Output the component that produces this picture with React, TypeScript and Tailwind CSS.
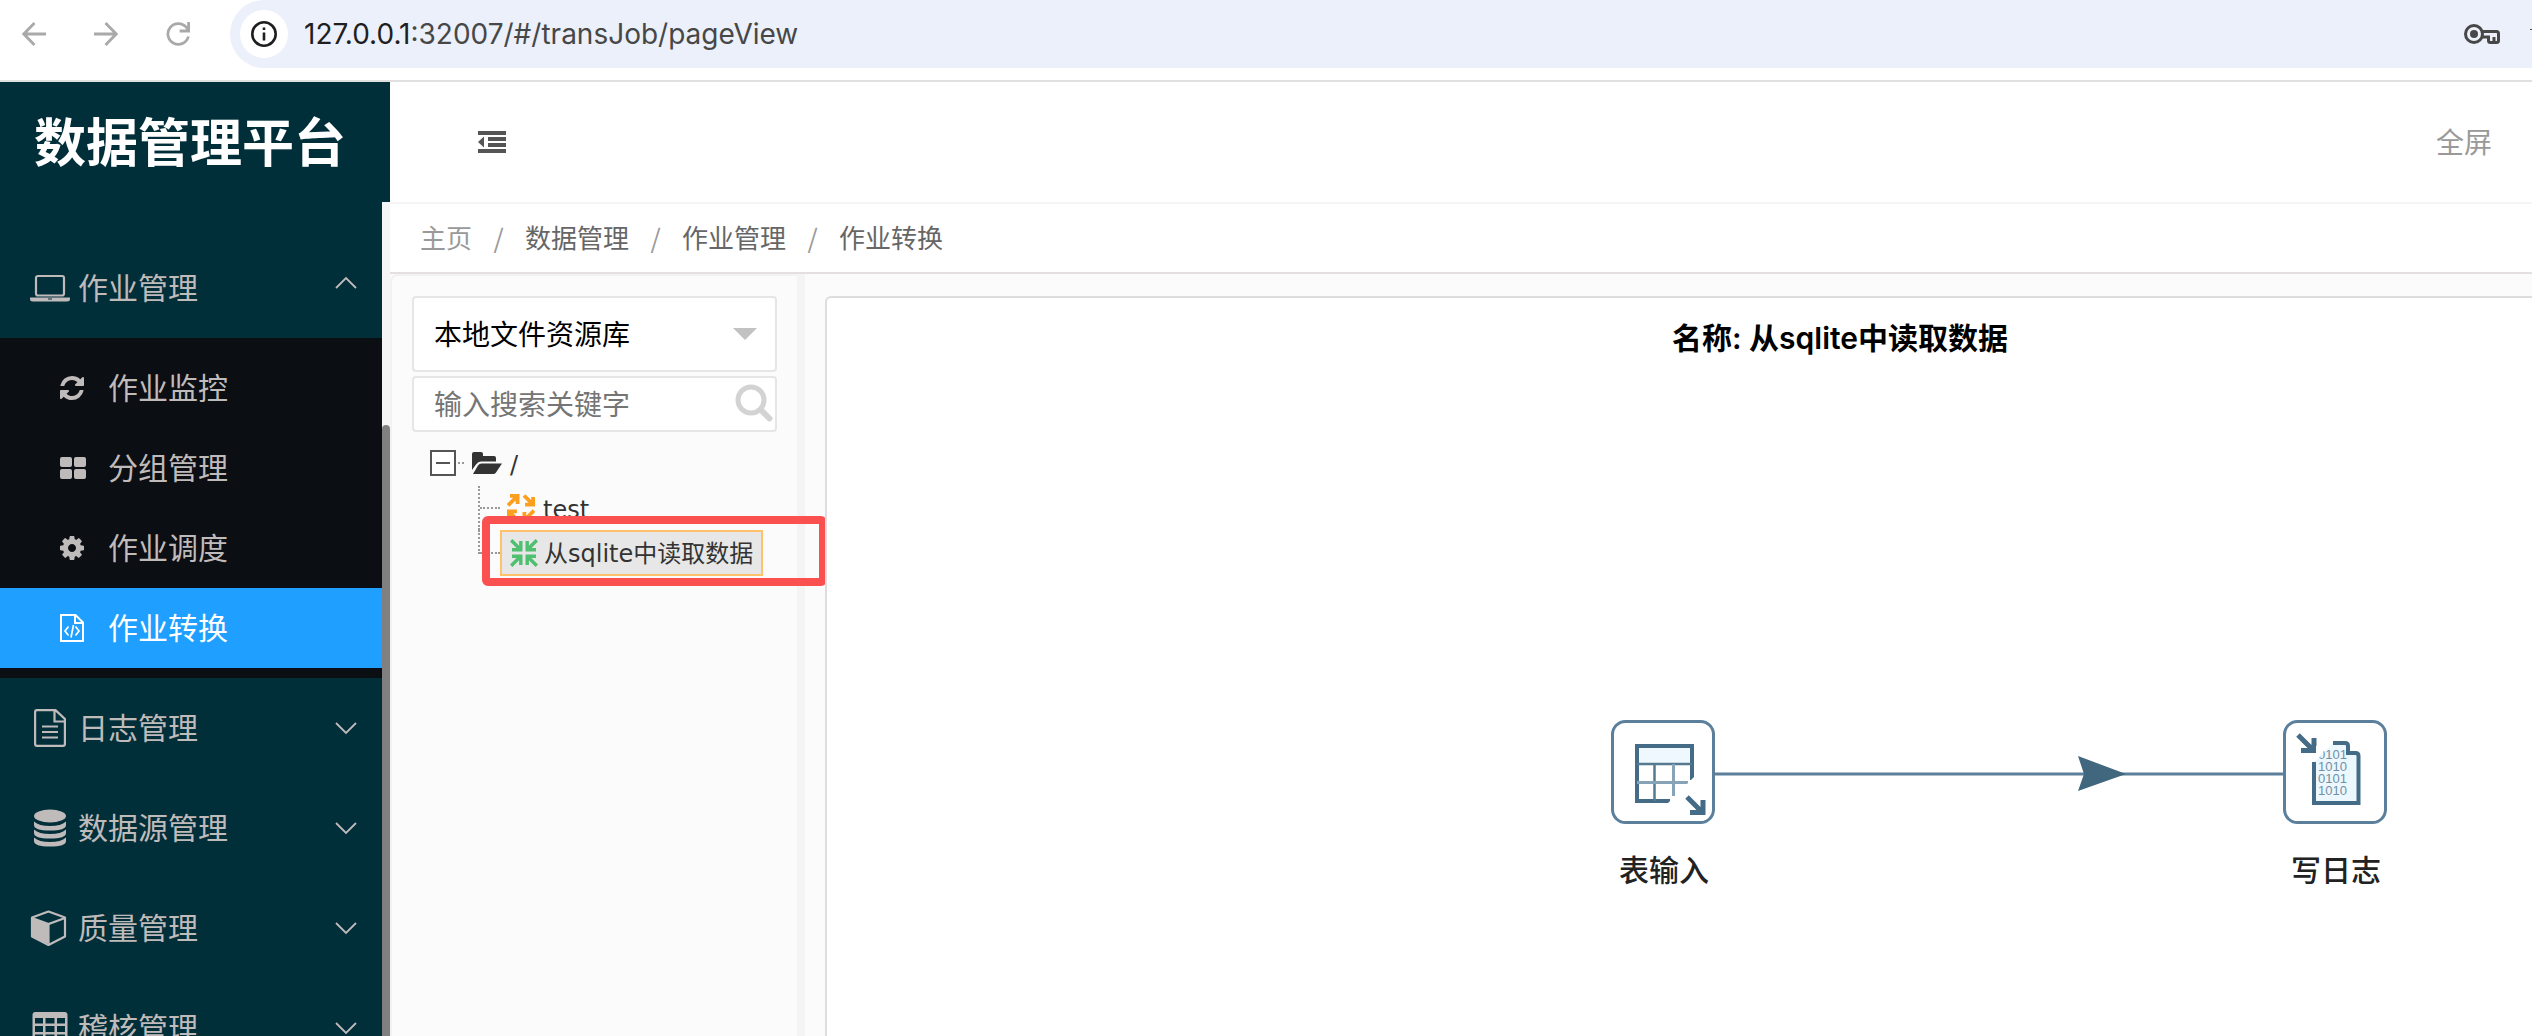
import type { ReactNode } from "react";

type IconProps = { className?: string };

function RefreshIcon({ className }: IconProps) {
  return (
    <svg viewBox="128 128 1536 1536" fill="currentColor" className={className} aria-hidden="true">
      <path d="M1639 1056q0 5-1 7-64 268-268 434.5t-478 166.5q-146 0-282.5-55t-243.5-157l-129 129q-19 19-45 19t-45-19-19-45v-448q0-26 19-45t45-19h448q26 0 45 19t19 45-19 45l-137 137q71 66 161 102t187 36q134 0 250-65t186-179q11-17 53-117 8-23 30-23h192q13 0 22.5 9.5t9.5 22.5zm25-800v448q0 26-19 45t-45 19h-448q-26 0-45-19t-19-45 19-45l138-138q-148-137-349-137-134 0-250 65t-186 179q-11 17-53 117-8 23-30 23h-199q-13 0-22.5-9.5t-9.5-22.5v-7q65-268 270-434.5t480-166.5q146 0 284 55.5t245 156.5l130-129q19-19 45-19t45 19 19 45z" />
    </svg>
  );
}

function GridIcon({ className }: IconProps) {
  return (
    <svg viewBox="0 0 26 22" fill="currentColor" className={className} aria-hidden="true">
      <rect width="12" height="10" rx="2" />
      <rect x="14" width="12" height="10" rx="2" />
      <rect y="12" width="12" height="10" rx="2" />
      <rect x="14" y="12" width="12" height="10" rx="2" />
    </svg>
  );
}

function CogIcon({ className }: IconProps) {
  return (
    <svg viewBox="128 128 1536 1536" fill="currentColor" className={className} aria-hidden="true">
      <path d="M1152 896q0-106-75-181t-181-75-181 75-75 181 75 181 181 75 181-75 75-181zm512-109v222q0 12-8 23t-20 13l-185 28q-19 54-39 91 35 50 107 138 10 12 10 25t-9 23q-27 37-99 108t-94 71q-12 0-26-9l-138-108q-44 23-91 38-16 136-29 186-7 28-36 28h-222q-14 0-24.5-8.5t-11.5-21.5l-28-184q-49-16-90-37l-141 107q-10 9-25 9-14 0-25-11-126-114-165-168-7-10-7-23 0-12 8-23 15-21 51-66.5t54-70.5q-27-50-41-99l-183-27q-13-2-21-12.5t-8-23.5v-222q0-12 8-23t19-13l186-28q14-46 39-92-40-57-107-138-10-12-10-24 0-10 9-23 26-36 98.5-107.5t94.5-71.5q13 0 26 10l138 107q44-23 91-38 16-136 29-186 7-28 36-28h222q14 0 24.5 8.5t11.5 21.5l28 184q49 16 90 37l142-107q9-9 24-9 13 0 25 10 129 119 165 170 7 8 7 22 0 12-8 23-15 21-51 66.5t-54 70.5q26 50 41 98l183 28q13 2 21 12.5t8 23.5z" />
    </svg>
  );
}

function FileCodeIcon({ className }: IconProps) {
  return (
    <svg viewBox="0 0 24 28" fill="none" stroke="currentColor" className={className} aria-hidden="true">
      <path d="M1 1h14.500l7.500 7.500V27H1zM15 1v8h8" strokeWidth="2" />
      <path d="M8.500 12.500L5 17l3.500 4.500M15.500 12.500L19 17l-3.500 4.500M13.500 11l-2.500 12.500" strokeWidth="1.700" />
    </svg>
  );
}

function LaptopIcon({ className }: IconProps) {
  return (
    <svg viewBox="0 0 40 28" className={className} aria-hidden="true">
      <rect x="6" y="2" width="28" height="19.500" rx="2" fill="none" stroke="currentColor" strokeWidth="2.200" />
      <path
        d="M0 23.500h40v1.500q0 2.500-3 2.500H3q-3 0-3-2.500zM18 24.500v1h4v-1z"
        fill="currentColor"
        fillRule="evenodd"
      />
    </svg>
  );
}

function FileTextIcon({ className }: IconProps) {
  return (
    <svg viewBox="0 0 40 38" fill="none" stroke="currentColor" strokeWidth="2.200" className={className} aria-hidden="true">
      <path d="M6 1.100h19.500L34.900 10v25q0 1.900-1.900 1.900H7q-1.900 0-1.900-1.900V3Q5.100 1.100 7 1.100zM24.500 1.100v11.400h10.400" />
      <path d="M12 17.500h16M12 23h16M12 28.500h16" />
    </svg>
  );
}

function DatabaseIcon({ className }: IconProps) {
  return (
    <svg viewBox="0 0 40 38" fill="currentColor" className={className} aria-hidden="true">
      <ellipse cx="20" cy="7" rx="16" ry="6.500" />
      <path d="M4 12.500q5 4.500 16 4.500t16-4.500v3.500q0 5.500-16 5.500T4 16z" />
      <path d="M4 20.500q5 4.500 16 4.500t16-4.500v3.500q0 5.500-16 5.500T4 24z" />
      <path d="M4 28.500q5 4.500 16 4.500t16-4.500v3.500q0 5.500-16 5.500T4 32z" />
    </svg>
  );
}

function CubeIcon({ className }: IconProps) {
  return (
    <svg viewBox="0 0 40 38" className={className} aria-hidden="true">
      <path
        d="M18.500 2.500L35 8.500v19L18.500 36 2 27.500v-19z"
        fill="none"
        stroke="currentColor"
        strokeWidth="2.200"
        strokeLinejoin="round"
      />
      <path d="M2 9l16.500 6L35 9" fill="none" stroke="currentColor" strokeWidth="2.200" />
      <path d="M2 9l17.600 6.300V35.500L2 27.500z" fill="currentColor" />
    </svg>
  );
}

function TableIcon({ className }: IconProps) {
  return (
    <svg viewBox="0 0 40 38" className={className} aria-hidden="true">
      <path
        d="M5.500 3h29q3 0 3 3v26q0 3-3 3h-29q-3 0-3-3V6q0-3 3-3zM5 9v5.500h8V9zM15.500 9v5.500h9V9zM27 9v5.500h8V9zM5 17v6h8v-6zM15.500 17v6h9v-6zM27 17v6h8v-6zM5 25.500V32h8v-6.500zM15.500 25.500V32h9v-6.500zM27 25.500V32h8v-6.500z"
        fill="currentColor"
        fillRule="evenodd"
      />
    </svg>
  );
}

function Chevron({ open }: { open?: boolean }) {
  return (
    <svg viewBox="0 0 22 24" fill="none" stroke="currentColor" strokeWidth="1.800" className="h-6 w-[22px]" aria-hidden="true">
      <path d={open ? "M1 12l10-10 10 10" : "M1 7l10 10 10-10"} />
    </svg>
  );
}

function BrowserBar() {
  return (
    <div className="flex h-[82px] shrink-0 items-start border-b-2 border-[#e0e0e0] bg-white pl-[22px]">
      <div className="flex h-[68px] items-center gap-12 pr-10 text-[#a9a9a9]">
        <button type="button" aria-label="后退">
          <svg viewBox="0 0 24 24" fill="none" stroke="currentColor" strokeWidth="2.800" className="size-6">
            <path d="M12.500 1L1.800 12l10.700 11M1.800 12H24" />
          </svg>
        </button>
        <button type="button" aria-label="前进">
          <svg viewBox="0 0 24 24" fill="none" stroke="currentColor" strokeWidth="2.800" className="size-6">
            <path d="M11.500 1l10.700 11-10.700 11M22.200 12H0" />
          </svg>
        </button>
        <button type="button" aria-label="刷新">
          <svg viewBox="0 0 24 24" fill="none" stroke="currentColor" strokeWidth="2.800" className="size-6">
            <path d="M22.400 14.500A10.400 10.400 0 1 1 20.500 5.500L22.500 8.500M22.600 0v9h-9" />
          </svg>
        </button>
      </div>
      <div className="flex h-[68px] flex-1 items-center rounded-l-full bg-[#ebf0fa] pl-[10px] text-[28px]">
        <span className="flex size-12 items-center justify-center rounded-full bg-white">
          <svg viewBox="0 0 26 26" fill="none" stroke="#1f1f1f" className="size-[26px]" aria-hidden="true">
            <circle cx="13" cy="13" r="11.700" strokeWidth="2.600" />
            <path d="M13 11.500V19.500M13 6.500V9" strokeWidth="2.600" />
          </svg>
        </span>
        <span className="flex-1 pl-4 font-[Inter,sans-serif] text-[#474747]">
          <span className="text-[#1f1f1f]">127.0.0.1</span>:32007/#/transJob/pageView
        </span>
        <svg viewBox="0 0 36 20" fill="none" stroke="#474747" className="mr-[30px] h-5 w-9" aria-hidden="true">
          <circle cx="10" cy="10" r="8.500" strokeWidth="3" />
          <circle cx="10" cy="10" r="4" fill="#474747" stroke="none" />
          <path d="M18 7.500h14.500q2 0 2 2V16.500q0 2-2 2h-6q-2 0-2-2v-3.500H18M30 13v5" strokeWidth="3" />
        </svg>
        <span className="mt-[29px] h-px w-[2px] self-start bg-[#474747]" />
      </div>
    </div>
  );
}

type SubItem = { label: string; icon: ReactNode; active?: boolean };

const jobItems: SubItem[] = [
  { label: "作业监控", icon: <RefreshIcon className="size-6" /> },
  { label: "分组管理", icon: <GridIcon className="h-[22px] w-[26px]" /> },
  { label: "作业调度", icon: <CogIcon className="size-6" /> },
  { label: "作业转换", icon: <FileCodeIcon className="h-7 w-6" />, active: true },
];

const otherMenus = [
  { label: "日志管理", icon: <FileTextIcon className="h-[38px] w-10" /> },
  { label: "数据源管理", icon: <DatabaseIcon className="h-[38px] w-10" /> },
  { label: "质量管理", icon: <CubeIcon className="h-[38px] w-10" /> },
  { label: "稽核管理", icon: <TableIcon className="h-[38px] w-10" /> },
];

function MenuButton({ label, icon, open }: { label: string; icon: ReactNode; open?: boolean }) {
  return (
    <button type="button" aria-expanded={!!open} className="flex h-[100px] w-full items-center pl-[30px] pr-[25px]">
      {icon}
      <span className="flex-1 pb-1 pl-2 text-left">{label}</span>
      <Chevron open={open} />
    </button>
  );
}

function Sidebar() {
  return (
    <aside className="flex w-[390px] shrink-0 flex-col bg-[#002f3a]">
      <h1 className="flex h-[120px] shrink-0 items-center pb-1 pl-[34px] text-[52px] font-bold text-white">
        数据管理平台
      </h1>
      <div className="flex min-h-0 flex-1">
        <nav className="flex-1 overflow-hidden pt-9 text-[30px] text-[#c0bbbb]">
          <MenuButton label="作业管理" icon={<LaptopIcon className="h-7 w-10" />} open />
          <ul className="bg-[#0b0e12] py-[10px]">
            {jobItems.map((item) => (
              <li key={item.label}>
                <a
                  href="#"
                  className={
                    item.active
                      ? "flex h-20 items-center bg-[#1f9fff] pl-[60px] text-white"
                      : "flex h-20 items-center pl-[60px]"
                  }
                >
                  <span className="w-12">{item.icon}</span>
                  <span className="pb-1">{item.label}</span>
                </a>
              </li>
            ))}
          </ul>
          {otherMenus.map((menu) => (
            <MenuButton key={menu.label} label={menu.label} icon={menu.icon} />
          ))}
        </nav>
        <div className="flex w-2 flex-col bg-[#f5f5f5] pt-[223px]">
          <div className="flex-1 rounded-t-full bg-[#808080]" />
        </div>
      </div>
    </aside>
  );
}

function Breadcrumb() {
  const crumbs = ["数据管理", "作业管理", "作业转换"];

  return (
    <nav className="flex h-[70px] shrink-0 items-center border-b-2 border-[#e5dfe0] bg-white pb-[3px] pl-[30px] text-[26px] text-[#666]">
      <a href="#" className="text-[#999]">
        主页
      </a>
      {crumbs.map((crumb) => (
        <span key={crumb} className="flex">
          <span className="mx-5 w-[13px] text-center text-[#999]">/</span>
          <a href="#">{crumb}</a>
        </span>
      ))}
    </nav>
  );
}

function JobIcon() {
  return (
    <svg viewBox="0 0 28 28" fill="none" stroke="#fd9f1e" strokeWidth="3.800" className="size-7" aria-hidden="true">
      <path d="M1 11.500L10 2.500M3 1.900h7.600v8" />
      <path d="M17 1.500l9 9M26.100 3v7.600h-8" />
      <path d="M11 26.500L2 17.500M1.900 25v-7.600h8" />
      <path d="M27 16.500l-9 9M25 26.100h-7.600v-8" />
    </svg>
  );
}

function TransIcon() {
  return (
    <svg viewBox="0 0 28 28" fill="none" stroke="#4fc070" strokeWidth="3.400" className="size-7" aria-hidden="true">
      <path d="M1.200 1.200l9 9M10.800 2v8.800H2" />
      <path d="M26.800 1.200l-9 9M17.200 2v8.800H26" />
      <path d="M1.200 26.800l9-9M10.800 26v-8.800H2" />
      <path d="M26.800 26.800l-9-9M17.200 26v-8.800H26" />
    </svg>
  );
}

function ResourceTree() {
  return (
    <div className="relative mt-2 pl-[18px] font-['DejaVu_Sans','Noto_Sans_CJK_SC',sans-serif] text-2xl text-[#333]">
      <div className="flex h-[46px] items-center">
        <button
          type="button"
          aria-label="收起"
          className="flex size-[26px] items-center justify-center border-2 border-[#555] bg-white"
        >
          <span className="h-[2px] w-[14px] bg-[#555]" />
        </button>
        <span className="ml-[2px] w-[6px] border-t-2 border-dotted border-[#999]" />
        <svg viewBox="0 0 30 22" fill="#333" className="ml-2 h-[22px] w-[30px]" aria-hidden="true">
          <path d="M0 2q0-2 2-2h7q2 0 2 2v2h11q2 0 2 2v3.500H9q-3 0-5 3L0 18z" />
          <path d="M9.500 11.500H30L24 20.500q-1 1.500-3 1.500H1l5-8.500q1.200-2 3.500-2z" />
        </svg>
        <span className="pt-1 pl-2">/</span>
      </div>
      <ul className="ml-12">
        <li className="flex h-11">
          <span className="w-[2px] border-l-2 border-dotted border-[#999]" />
          <span className="mt-[21px] h-0 w-5 border-t-2 border-dotted border-[#999]" />
          <a href="#" className="flex items-center pl-[7px]">
            <JobIcon />
            <span className="pt-1 pl-2">test</span>
          </a>
        </li>
        <li className="flex h-[46px]">
          <span className="h-6 w-[2px] border-l-2 border-dotted border-[#999]" />
          <span className="mt-[22px] h-0 w-5 border-t-2 border-dotted border-[#999]" />
          <a href="#" className="flex items-center border-2 border-[#ffc26b] bg-[#e7e7e7] px-2 whitespace-nowrap">
            <TransIcon />
            <span className="pt-[2px] pl-[6px]">从sqlite中读取数据</span>
          </a>
        </li>
      </ul>
      <div className="absolute top-[76px] left-[70px] h-[70px] w-[345px] rounded-md border-8 border-[#fb5050]" />
    </div>
  );
}

function ResourcePanel() {
  return (
    <section className="w-[407px] shrink-0 rounded-tl-lg border-t-2 border-l-2 border-[#f2f2f2] bg-[#fbfbfb] px-5 pt-5">
      <div className="relative">
        <select
          aria-label="资源库"
          className="h-[76px] w-full appearance-none rounded border-2 border-[#e6e6e6] bg-white pb-[2px] pl-5 text-[28px] text-black"
        >
          <option>本地文件资源库</option>
        </select>
        <svg viewBox="0 0 24 12" fill="#c2c2c2" className="absolute top-8 right-5 h-3 w-6" aria-hidden="true">
          <path d="M0 0h24L12 12z" />
        </svg>
      </div>
      <div className="relative mt-1">
        <input
          type="text"
          aria-label="输入搜索关键字"
          placeholder="输入搜索关键字"
          className="block h-14 w-full rounded border-2 border-[#e6e6e6] bg-white pb-[2px] pl-5 text-[28px] placeholder:text-[#757575]"
        />
        <svg viewBox="0 0 38 38" fill="none" stroke="#d3d3d3" className="absolute top-2 right-1 size-[38px]" aria-hidden="true">
          <circle cx="16" cy="16" r="13" strokeWidth="5" />
          <path d="M26 26l8.500 8.500" strokeWidth="6" strokeLinecap="round" />
        </svg>
      </div>
      <ResourceTree />
    </section>
  );
}

function TableInputIcon() {
  return (
    <svg viewBox="0 0 104 104" className="size-[104px]" aria-hidden="true">
      <rect x="1.500" y="1.500" width="101" height="101" rx="13" fill="#fff" stroke="#5c809b" strokeWidth="3" />
      <path d="M26 26h55v18H26z" fill="#f0f8ff" />
      <g fill="none" stroke="#456c87">
        <path d="M59 81H26V26h55v34" strokeWidth="4" />
        <path d="M26 44h55M43.500 44v37" stroke="#55798f" strokeWidth="2.500" />
        <path d="M62.500 44v32M26 62.500h51" stroke="#86a3b8" strokeWidth="3" />
        <path d="M84 56L55 85h29z" fill="#fff" stroke="none" />
        <path d="M76 77l15.500 15.500M92 80v12.500H79" strokeWidth="5" />
      </g>
    </svg>
  );
}

function WriteLogIcon() {
  const rows = ["0101", "1010", "0101", "1010"];

  return (
    <svg viewBox="0 0 104 104" className="size-[104px]" aria-hidden="true">
      <rect x="1.500" y="1.500" width="101" height="101" rx="13" fill="#fff" stroke="#5c809b" strokeWidth="3" />
      <path d="M31 83V42L50 23h13l3 10h9.500v50z" fill="#edf8fe" />
      <g fill="none" stroke="#456c87">
        <path d="M31 42v41h44.500V36q0-3-3-3H65v-7q0-3-3-3H50" strokeWidth="4" />
        <path d="M15 15l15.500 15.500M31 18v12.500H18" strokeWidth="5" />
      </g>
      {rows.map((row, i) => (
        <text key={i} x="35" y={39 + i * 12} fontSize="13" fontFamily="Liberation Sans, sans-serif" fill="#6f90a8">
          {row}
        </text>
      ))}
      <path d="M33 26h11l-8 12h-3z" fill="#fff" />
    </svg>
  );
}

function FlowNode({ label, children }: { label: string; children: ReactNode }) {
  return (
    <div className="flex flex-col items-center gap-[22px]">
      {children}
      <span className="pl-[2px] text-[30px] leading-[44px] font-medium text-[#222]">{label}</span>
    </div>
  );
}

function TransCanvas() {
  return (
    <section className="ml-5 flex-1 overflow-hidden pt-[22px]">
      <div className="relative h-full w-[2028px] rounded-tl-md border-t-2 border-l-2 border-[#ddd] bg-white">
        <h2 className="pt-[18px] text-center font-[Inter,'Noto_Sans_CJK_SC',sans-serif] text-[30px] leading-[44px] font-semibold text-black">
          名称: 从sqlite中读取数据
        </h2>
        <svg viewBox="0 0 569 40" className="absolute top-[456px] left-[888px] h-10 w-[569px]" aria-hidden="true">
          <path d="M0 20h569" stroke="#5c809b" strokeWidth="3" />
          <path d="M363 2l48 18-48 17 6-17z" fill="#41677f" />
        </svg>
        <div className="absolute top-[422px] left-[784px]">
          <FlowNode label="表输入">
            <TableInputIcon />
          </FlowNode>
        </div>
        <div className="absolute top-[422px] left-[1456px]">
          <FlowNode label="写日志">
            <WriteLogIcon />
          </FlowNode>
        </div>
      </div>
    </section>
  );
}

export default function App() {
  return (
    <div className="flex h-screen flex-col overflow-hidden bg-white font-['Noto_Sans_CJK_SC',sans-serif]">
      <BrowserBar />
      <div className="flex min-h-0 flex-1">
        <Sidebar />
        <main className="flex min-w-0 flex-1 flex-col bg-[#fbfbfb]">
          <header className="flex h-[122px] shrink-0 items-center justify-between border-b-2 border-[#f5f5f5] bg-white pr-10 pl-[88px]">
            <button type="button" aria-label="收起菜单">
              <svg viewBox="0 0 28 22" fill="#555" className="h-[22px] w-7">
                <path d="M0 0h28v4H0zM10 6h18v4H10zM10 12h18v4H10zM0 18h28v4H0zM6 5.500v11L0 11z" />
              </svg>
            </button>
            <a href="#" className="pb-[2px] text-[28px] text-[#999]">
              全屏
            </a>
          </header>
          <Breadcrumb />
          <div className="flex min-h-0 flex-1">
            <ResourcePanel />
            <div className="w-2 shrink-0 bg-[#f4f4f4]" />
            <TransCanvas />
          </div>
        </main>
      </div>
    </div>
  );
}
